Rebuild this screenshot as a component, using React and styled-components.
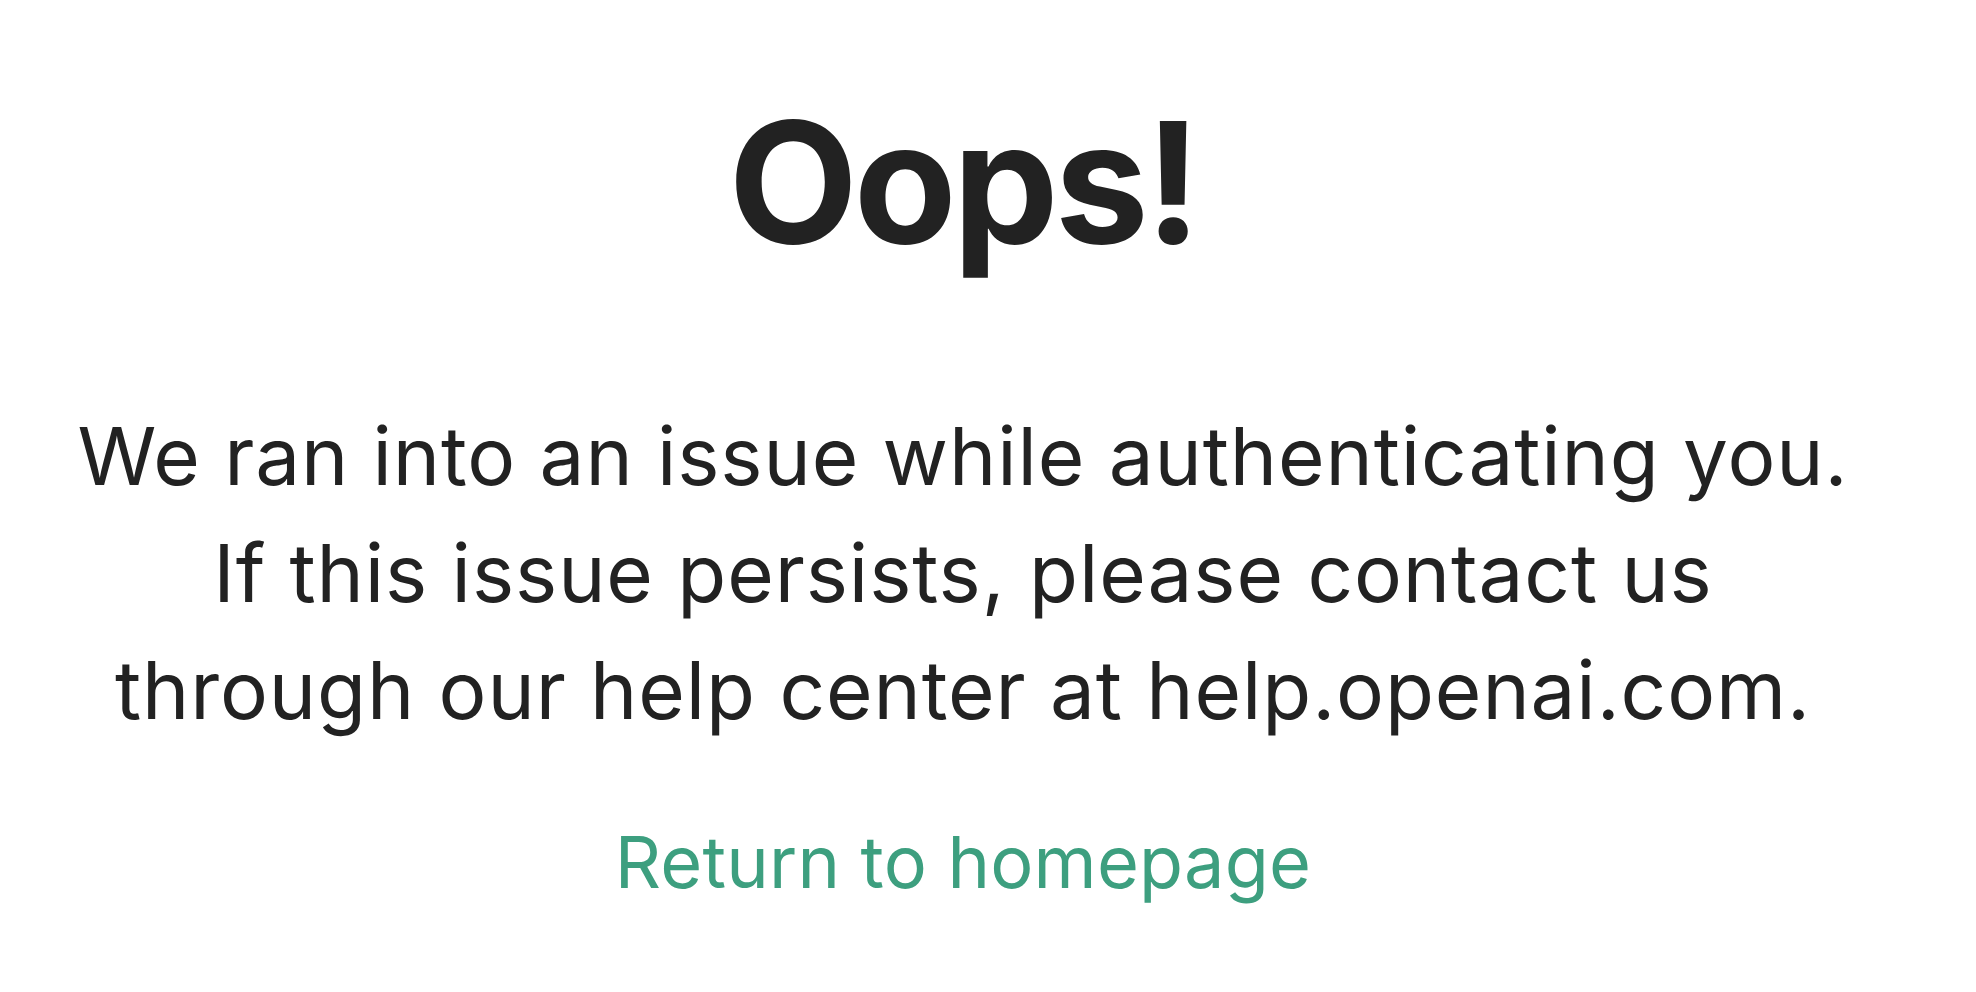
import React from "react";
import styled, { createGlobalStyle } from "styled-components";

const GlobalStyle = createGlobalStyle`
  html, body {
    margin: 0;
    padding: 0;
    background: #ffffff;
  }
  body {
    font-family: Inter, "Noto Sans", "Liberation Sans", sans-serif;
    color: #202123;
  }
`;

const Page = styled.main`
  min-height: 992px;
  box-sizing: border-box;
  display: flex;
  flex-direction: column;
  align-items: center;
  padding: 82px 50px 0 0;
`;

const Title = styled.h1`
  margin: 0;
  font-size: 168px;
  line-height: 1.2;
  font-weight: 700;
  letter-spacing: -4px;
  color: #222222;
`;

const Message = styled.p`
  margin: 113px 0 0;
  font-size: 80px;
  line-height: 117px;
  font-weight: 400;
  letter-spacing: 0.9px;
  text-align: center;
  color: #222222;
`;

const HomeLink = styled.a`
  margin-top: 71px;
  font-size: 72px;
  line-height: 1.2;
  font-weight: 400;
  letter-spacing: 0.2px;
  color: #3d9f7f;
  text-decoration: none;
  cursor: pointer;
`;

export default function App() {
  return (
    <>
      <GlobalStyle />
      <Page>
        <Title>Oops!</Title>
        <Message>
          We ran into an issue while authenticating you.
          <br />
          If this issue persists, please contact us
          <br />
          through our help center at help.openai.com.
        </Message>
        <HomeLink href="#">Return to homepage</HomeLink>
      </Page>
    </>
  );
}
